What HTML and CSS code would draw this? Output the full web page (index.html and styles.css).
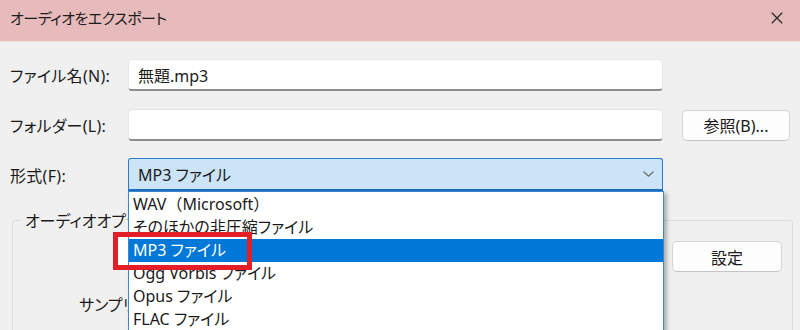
FILE: index.html
```html
<!DOCTYPE html>
<html lang="ja">
<head>
<meta charset="utf-8">
<title>オーディオをエクスポート</title>
<link rel="stylesheet" href="styles.css">
</head>
<body>
<div class="window">
  <header class="titlebar">
    <span class="title">オーディオをエクスポート</span>
    <svg class="close" width="12" height="12" viewBox="0 0 12 12"><path d="M0.8 0.8L11.2 11.2M11.2 0.8L0.8 11.2"/></svg>
  </header>
  <main class="content">
    <div class="form">
      <label class="label">ファイル名(N):</label>
      <div class="input">無題.mp3</div>
      <span class="spacer"></span>

      <label class="label">フォルダー(L):</label>
      <div class="input"></div>
      <button class="btn btn-browse">参照(B)...</button>

      <label class="label">形式(F):</label>
      <div class="select-wrap">
        <div class="select">
          <span>MP3 ファイル</span>
          <svg class="chevron" width="11" height="6" viewBox="0 0 11 6"><path d="M0.5 0.5L5.5 5.2L10.5 0.5"/></svg>
        </div>
        <ul class="list">
          <li class="full">WAV（Microsoft）</li>
          <li>そのほかの非圧縮ファイル</li>
          <li class="active">MP3 ファイル</li>
          <li>Ogg Vorbis ファイル</li>
          <li>Opus ファイル</li>
          <li>FLAC ファイル</li>
        </ul>
      </div>
      <span class="spacer"></span>
    </div>

    <fieldset class="group">
      <legend class="legend">オーディオオプション</legend>
      <div class="group-row end">
        <button class="btn btn-setting">設定</button>
      </div>
      <div class="group-row">
        <span class="sub-label">サンプリング周波数(S):</span>
      </div>
    </fieldset>
  </main>
  <div class="callout"></div>
</div>
</body>
</html>
```

FILE: styles.css
```css
* { box-sizing: border-box; }

html, body {
  margin: 0;
  padding: 0;
  background: #f0f0f0;
  overflow: hidden;
}

body {
  font-family: "Noto Sans", "Noto Sans CJK JP", sans-serif;
  font-size: 15px;
  color: #1a1a1a;
  font-feature-settings: "palt" 1;
}

.window {
  position: relative;
  width: 800px;
  height: 330px;
  overflow: hidden;
}

.titlebar {
  height: 42px;
  background: #e7bbbb;
  border-bottom: 1px solid #f2dede;
  display: flex;
  align-items: center;
  justify-content: space-between;
  padding: 0 17px 6px 10px;
}

.title {
  font-size: 15px;
  letter-spacing: -0.5px;
  color: #1c1c1c;
}

.close path {
  stroke: #2a2a2a;
  stroke-width: 1.3;
  fill: none;
}

.content {
  padding-top: 17px;
}

.form {
  display: grid;
  grid-template-columns: 128px 535px 127px;
  row-gap: 18px;
  grid-auto-rows: 32px;
  align-items: center;
}

.label {
  padding-left: 10px;
  font-size: 16px;
  letter-spacing: 0.3px;
}

.input {
  height: 32px;
  background: #ffffff;
  border: 1px solid #e6e6e6;
  border-bottom: 2px solid #8c8c8c;
  border-radius: 4px;
  padding: 0 9px;
  display: flex;
  align-items: center;
  font-size: 16px;
}

.btn {
  font-family: inherit;
  font-feature-settings: "palt" 1;
  font-size: 16px;
  color: #1a1a1a;
  background: #fdfdfd;
  border: 1px solid #d4d4d4;
  border-bottom-color: #c4c4c4;
  border-radius: 5px;
  height: 31px;
  padding: 0;
}

.btn-browse {
  width: 108px;
  justify-self: end;
}

.select-wrap {
  position: relative;
  height: 33px;
  align-self: end;
  z-index: 3;
}

.select {
  height: 33px;
  background: #cce4f7;
  border: 1px solid #2c7bc7;
  border-bottom: 2px solid #1f6fbd;
  border-radius: 3px 3px 0 0;
  display: flex;
  align-items: center;
  justify-content: space-between;
  padding: 0 8px 0 9px;
  font-size: 16px;
}

.chevron path {
  stroke: #6b6b6b;
  stroke-width: 1.2;
  fill: none;
}

.list {
  position: absolute;
  top: 33px;
  left: 0;
  width: 536px;
  margin: 0;
  padding: 1px 0 0;
  list-style: none;
  background: #ffffff;
  border: 1px solid #3a86d0;
  box-shadow: 3px 2px 4px rgba(0, 0, 0, 0.28);
  height: 160px;
}

.list li {
  height: 23px;
  line-height: 23px;
  padding-left: 4px;
  font-size: 16px;
  color: #1a1a1a;
  white-space: nowrap;
}

.list li.full {
  font-feature-settings: normal;
}

.list li.active {
  background: #0078d7;
  color: #ffffff;
}

.group {
  margin: 17px 0 0 12px;
  width: 781px;
  height: 140px;
  border: 1px solid #dcdcdc;
  border-radius: 3px;
  padding: 0;
  position: relative;
  z-index: 1;
}

.legend {
  margin-left: 8px;
  padding: 0 4px;
  font-size: 16px;
}

.group-row {
  display: flex;
}

.group-row.end {
  justify-content: flex-end;
  padding: 9px 10px 0 0;
}

.btn-setting {
  width: 110px;
}

.sub-label {
  margin: 20px 0 0 66px;
  font-size: 16px;
}

.callout {
  position: absolute;
  left: 113px;
  top: 232px;
  width: 139px;
  height: 38px;
  border: 5px solid #e31e26;
  z-index: 5;
}

.callout::before {
  content: "";
  position: absolute;
  left: 0;
  top: 0;
  width: 10px;
  height: 100%;
  background: #ffffff;
}
```
